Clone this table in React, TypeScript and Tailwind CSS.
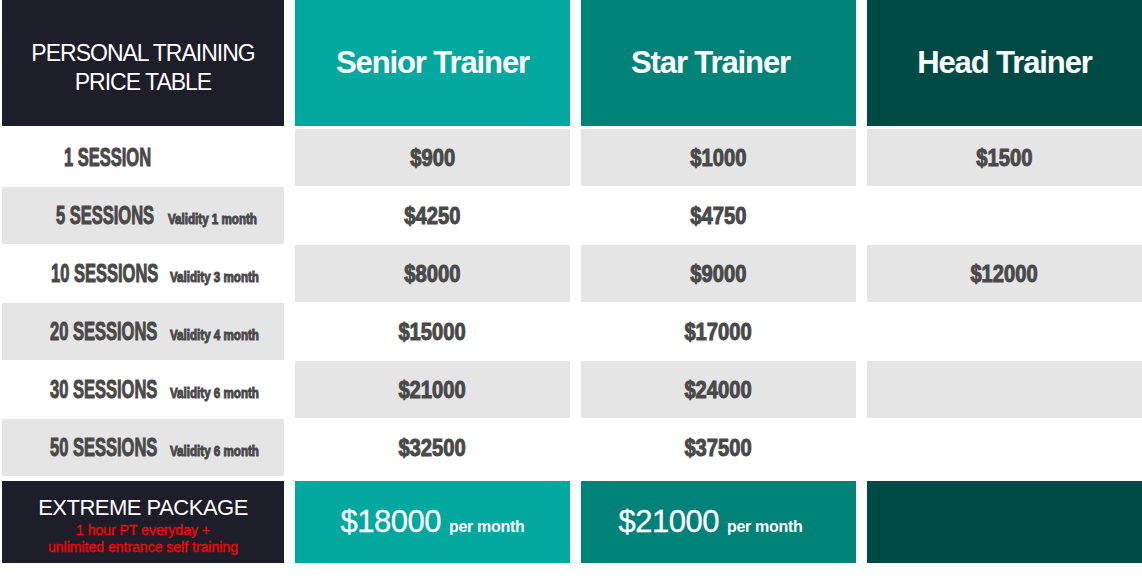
import React from "react"

const arial = "font-['Liberation_Sans',Arial,sans-serif]"
const heavy = `${arial} font-bold text-[#494949] [-webkit-text-stroke:1px_#494949] whitespace-nowrap`

const rows = [
  { count: "1 SESSION", validity: "", pad: "pl-[62px]", box: "w-[100px]", prices: ["$900", "$1000", "$1500"] },
  { count: "5 SESSIONS", validity: "Validity 1 month", pad: "pl-[54px]", box: "w-[112px]", prices: ["$4250", "$4750", ""] },
  { count: "10 SESSIONS", validity: "Validity 3 month", pad: "pl-[49px]", box: "w-[119px]", prices: ["$8000", "$9000", "$12000"] },
  { count: "20 SESSIONS", validity: "Validity 4 month", pad: "pl-[48px]", box: "w-[120px]", prices: ["$15000", "$17000", ""] },
  { count: "30 SESSIONS", validity: "Validity 6 month", pad: "pl-[48px]", box: "w-[120px]", prices: ["$21000", "$24000", ""] },
  { count: "50 SESSIONS", validity: "Validity 6 month", pad: "pl-[48px]", box: "w-[120px]", prices: ["$32500", "$37500", ""] },
]

function PriceCell({ value, gray }: { value: string; gray: boolean }) {
  return (
    <div className={`h-[57px] flex items-center justify-center ${gray ? "bg-[#e5e5e5]" : "bg-white"}`}>
      <span className={`${heavy} inline-block scale-x-[0.84] text-[24px] leading-none`}>{value}</span>
    </div>
  )
}

export default function App() {
  return (
    <div className="w-[1142px] h-[584px] bg-white pl-[2px] flex flex-col">
      {/* header */}
      <div className="grid grid-cols-[282px_275px_275px_275px] gap-x-[11px] h-[126px] mb-[3px]">
        <div className={`bg-[#1e1d2a] flex flex-col items-center justify-center pt-[10px] text-white text-[23px] leading-[29px] tracking-[-1px] ${arial}`}>
          <span>PERSONAL TRAINING</span>
          <span>PRICE TABLE</span>
        </div>
        <div className={`bg-[#00a8a0] flex items-center justify-center text-white font-bold text-[31px] tracking-[-1.1px] ${arial}`}>
          Senior Trainer
        </div>
        <div className={`bg-[#008278] flex items-center justify-center pr-[16px] text-white font-bold text-[31px] tracking-[-1.1px] ${arial}`}>
          Star Trainer
        </div>
        <div className={`bg-[#004a45] flex items-center justify-center text-white font-bold text-[31px] tracking-[-1.1px] ${arial}`}>
          Head Trainer
        </div>
      </div>

      {/* session rows */}
      {rows.map((r, i) => {
        const odd = i % 2 === 0
        return (
          <div key={r.count} className="grid grid-cols-[282px_275px_275px_275px] gap-x-[11px] h-[58px]">
            <div className={`h-[57px] flex items-center ${r.pad} ${odd ? "bg-white" : "bg-[#e5e5e5]"}`}>
              <div className="flex items-baseline">
                <span className={`${r.box} inline-block origin-left scale-x-[0.66] ${heavy} text-[25px] leading-none`}>
                  {r.count}
                </span>
                {r.validity && (
                  <span className={`inline-block origin-left scale-x-[0.8] ${heavy} text-[14.5px] leading-none [-webkit-text-stroke:0.5px_#494949]`}>
                    {r.validity}
                  </span>
                )}
              </div>
            </div>
            {r.prices.map((p, j) => (
              <PriceCell key={j} value={p} gray={odd} />
            ))}
          </div>
        )
      })}

      {/* extreme package */}
      <div className="grid grid-cols-[282px_275px_275px_275px] gap-x-[11px] h-[82px] mt-[4px]">
        <div className={`bg-[#1e1d2a] flex flex-col items-center pt-[15px] ${arial}`}>
          <span className="text-white text-[22px] leading-[24px] tracking-[-0.5px]">EXTREME PACKAGE</span>
          <span className="text-[#ff0000] text-[14px] leading-[17px] mt-[2px] [-webkit-text-stroke:0.3px_#ff0000]">1 hour PT everyday +</span>
          <span className="text-[#ff0000] text-[14px] leading-[17px] [-webkit-text-stroke:0.3px_#ff0000]">unlimited entrance self training</span>
        </div>
        <div className={`bg-[#00a8a0] flex items-baseline justify-center pt-[25px] text-white ${arial}`}>
          <span className="text-[31px] leading-none tracking-[-0.5px] [-webkit-text-stroke:0.3px_#ffffff]">$18000</span>
          <span className="ml-[8px] text-[16px] font-bold tracking-[-0.3px]">per month</span>
        </div>
        <div className={`bg-[#008278] flex items-baseline justify-center pt-[25px] pr-[16px] text-white ${arial}`}>
          <span className="text-[31px] leading-none tracking-[-0.5px] [-webkit-text-stroke:0.3px_#ffffff]">$21000</span>
          <span className="ml-[8px] text-[16px] font-bold tracking-[-0.3px]">per month</span>
        </div>
        <div className="bg-[#004a45]" />
      </div>
    </div>
  )
}
